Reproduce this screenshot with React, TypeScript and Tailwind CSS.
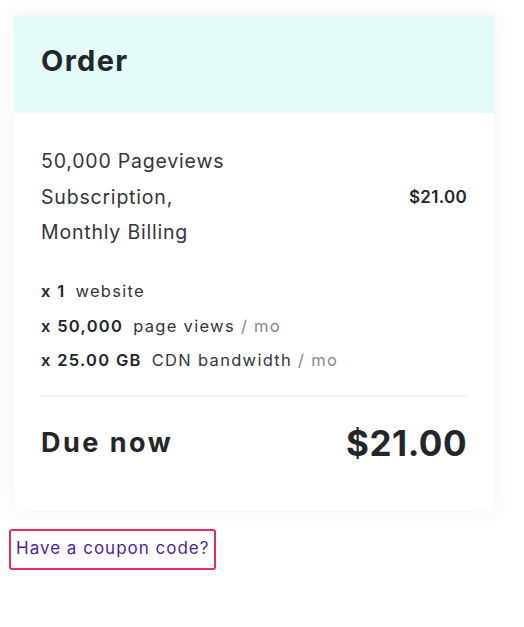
export default function App() {
  const items = [
    { qty: "x 1", label: "website", unit: "" },
    { qty: "x 50,000", label: "page views", unit: "/ mo" },
    { qty: "x 25.00 GB", label: "CDN bandwidth", unit: "/ mo" },
  ];

  return (
    <div className="min-h-screen bg-white font-['Inter',sans-serif] text-[#23262b]">
      <div className="pl-[14px] pt-[15px]">
        {/* Order card */}
        <div className="w-[480px] bg-white shadow-[0_0_22px_rgba(0,0,0,0.06)]">
          <div className="h-[98px] bg-[#e3fcfa] px-[27px] flex items-center">
            <h2 className="text-[29px] font-bold tracking-[1.3px] pb-[6px]">Order</h2>
          </div>

          <div className="px-[27px] pt-[31px] pb-[41px]">
            <div className="flex items-center justify-between">
              <div className="text-[19.5px] leading-[35.5px] tracking-[0.8px] text-[#33363b]">
                <div>50,000 Pageviews</div>
                <div>Subscription,</div>
                <div>Monthly Billing</div>
              </div>
              <div className="text-[17px] font-semibold tracking-[0.3px]">$21.00</div>
            </div>

            <div className="mt-[24px] flex flex-col">
              {items.map((it) => (
                <div key={it.qty} className="h-[34.5px] flex items-center text-[16.5px] tracking-[1.3px]">
                  <span className="font-semibold mr-[10px]">{it.qty}</span>
                  <span className="text-[#33363b]">{it.label}</span>
                  {it.unit && <span className="text-[#85888d] ml-[6px]">{it.unit}</span>}
                </div>
              ))}
            </div>

            <div className="mt-[17px] border-t-2 border-[#f1f1f1]" />

            <div className="mt-[20px] flex items-center justify-between">
              <span className="text-[27px] font-bold tracking-[2.5px]">Due now</span>
              <span className="text-[35px] font-bold tracking-[0.5px]">$21.00</span>
            </div>
          </div>
        </div>
      </div>

      {/* Coupon link */}
      <div className="pl-[9px] pt-[18px]">
        <button className="h-[41px] px-[5px] border-2 border-[#ee2a5f] rounded-[3px] text-[17px] tracking-[1px] text-[#4b1fa6]">
          Have a coupon code?
        </button>
      </div>
    </div>
  );
}
